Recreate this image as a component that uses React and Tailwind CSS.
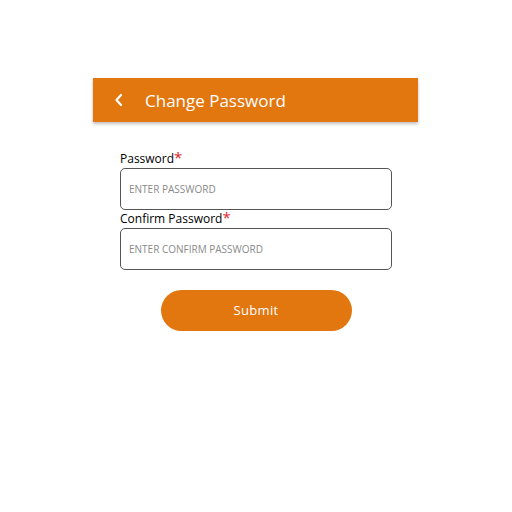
export default function App() {
  return (
    <div className="w-[512px] h-[512px] bg-white pt-[78px] font-['Open_Sans',sans-serif]">
      <div className="ml-[93px] w-[325px]">
        <div className="h-[44px] bg-[#e2760f] flex items-center shadow-[0_2px_3px_rgba(0,0,0,0.25)]">
          <svg width="10" height="14" viewBox="0 0 10 14" className="ml-[21px]">
            <path d="M7 2 L2.5 7 L7 12" stroke="white" strokeWidth="2.2" fill="none" strokeLinecap="round" strokeLinejoin="round" />
          </svg>
          <span className="ml-[21px] text-white text-[17px] leading-none">Change Password</span>
        </div>
        <div className="pl-[27px] pr-[26px] pt-[29px]">
          <div className="h-[16px] text-[12px] leading-[16px] text-black">
            Password<span className="text-[#e3242b] text-[15px] leading-[0]">*</span>
          </div>
          <div className="mt-[1px] h-[42px] border border-[#555] rounded-[5px] flex items-center px-[8px] text-[10px] text-[#8a8a8a]">
            ENTER PASSWORD
          </div>
          <div className="mt-[1px] h-[16px] text-[12px] leading-[16px] text-black">
            Confirm Password<span className="text-[#e3242b] text-[15px] leading-[0]">*</span>
          </div>
          <div className="mt-[1px] h-[42px] border border-[#555] rounded-[5px] flex items-center px-[8px] text-[10px] text-[#8a8a8a]">
            ENTER CONFIRM PASSWORD
          </div>
          <div className="mt-[20px] flex justify-center">
            <div className="w-[191px] h-[41px] rounded-full bg-[#e2760f] flex items-center justify-center text-white text-[13px] tracking-[0.3px]">
              Submit
            </div>
          </div>
        </div>
      </div>
    </div>
  )
}
